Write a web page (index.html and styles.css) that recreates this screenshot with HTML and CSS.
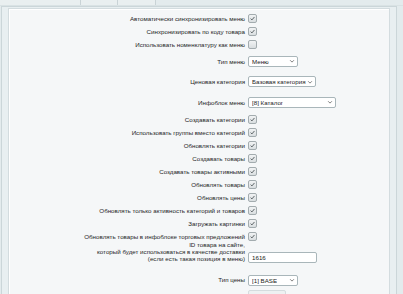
FILE: index.html
```html
<!DOCTYPE html>
<html lang="ru">
<head>
    <meta charset="UTF-8">
    <title>Настройки синхронизации меню</title>
    <link rel="stylesheet" href="styles.css">
</head>
<body>
    <div class="tabs">
        <div class="tab t1"></div>
        <div class="tab t2"></div>
        <div class="tab t3"></div>
        <div class="tab t4"></div>
    </div>
    <div class="frame">
        <div class="panel">
            <div class="row">
                <div class="lbl">Автоматически синхронизировать меню</div>
                <div class="ctl"><span class="cb on"><svg viewBox="0 0 10 10"><path d="M2.3 5.2 L4.2 7 L7.8 2.8"/></svg></span></div>
            </div>
            <div class="row">
                <div class="lbl">Синхронизировать по коду товара</div>
                <div class="ctl"><span class="cb on"><svg viewBox="0 0 10 10"><path d="M2.3 5.2 L4.2 7 L7.8 2.8"/></svg></span></div>
            </div>
            <div class="row">
                <div class="lbl">Использовать номенклатуру как меню</div>
                <div class="ctl"><span class="cb"></span></div>
            </div>

            <div class="row row-sel">
                <div class="lbl">Тип меню</div>
                <div class="ctl"><div class="sel w50"><span>Меню</span><svg viewBox="0 0 8 8"><path d="M1.5 3 L4 5.5 L6.5 3"/></svg></div></div>
            </div>
            <div class="row row-sel">
                <div class="lbl">Ценовая категория</div>
                <div class="ctl"><div class="sel w68"><span>Базовая категория</span><svg viewBox="0 0 8 8"><path d="M1.5 3 L4 5.5 L6.5 3"/></svg></div></div>
            </div>
            <div class="row row-sel">
                <div class="lbl">Инфоблок меню</div>
                <div class="ctl"><div class="sel w88"><span>[8] Каталог</span><svg viewBox="0 0 8 8"><path d="M1.5 3 L4 5.5 L6.5 3"/></svg></div></div>
            </div>

            <div class="row">
                <div class="lbl">Создавать категории</div>
                <div class="ctl"><span class="cb on"><svg viewBox="0 0 10 10"><path d="M2.3 5.2 L4.2 7 L7.8 2.8"/></svg></span></div>
            </div>
            <div class="row">
                <div class="lbl">Использовать группы вместо категорий</div>
                <div class="ctl"><span class="cb on"><svg viewBox="0 0 10 10"><path d="M2.3 5.2 L4.2 7 L7.8 2.8"/></svg></span></div>
            </div>
            <div class="row">
                <div class="lbl">Обновлять категории</div>
                <div class="ctl"><span class="cb on"><svg viewBox="0 0 10 10"><path d="M2.3 5.2 L4.2 7 L7.8 2.8"/></svg></span></div>
            </div>
            <div class="row">
                <div class="lbl">Создавать товары</div>
                <div class="ctl"><span class="cb on"><svg viewBox="0 0 10 10"><path d="M2.3 5.2 L4.2 7 L7.8 2.8"/></svg></span></div>
            </div>
            <div class="row">
                <div class="lbl">Создавать товары активными</div>
                <div class="ctl"><span class="cb on"><svg viewBox="0 0 10 10"><path d="M2.3 5.2 L4.2 7 L7.8 2.8"/></svg></span></div>
            </div>
            <div class="row">
                <div class="lbl">Обновлять товары</div>
                <div class="ctl"><span class="cb on"><svg viewBox="0 0 10 10"><path d="M2.3 5.2 L4.2 7 L7.8 2.8"/></svg></span></div>
            </div>
            <div class="row">
                <div class="lbl">Обновлять цены</div>
                <div class="ctl"><span class="cb on"><svg viewBox="0 0 10 10"><path d="M2.3 5.2 L4.2 7 L7.8 2.8"/></svg></span></div>
            </div>
            <div class="row">
                <div class="lbl">Обновлять только активность категорий и товаров</div>
                <div class="ctl"><span class="cb on"><svg viewBox="0 0 10 10"><path d="M2.3 5.2 L4.2 7 L7.8 2.8"/></svg></span></div>
            </div>
            <div class="row">
                <div class="lbl">Загружать картинки</div>
                <div class="ctl"><span class="cb on"><svg viewBox="0 0 10 10"><path d="M2.3 5.2 L4.2 7 L7.8 2.8"/></svg></span></div>
            </div>
            <div class="row">
                <div class="lbl">Обновлять товары в инфоблоке торговых предложений</div>
                <div class="ctl"><span class="cb on"><svg viewBox="0 0 10 10"><path d="M2.3 5.2 L4.2 7 L7.8 2.8"/></svg></span></div>
            </div>

            <div class="row row-id">
                <div class="lbl">ID товара на сайте,<br>который будет использоваться в качестве доставки<br>(если есть такая позиция в меню)</div>
                <div class="ctl"><div class="inp w69">1616</div></div>
            </div>

            <div class="row row-sel">
                <div class="lbl">Тип цены</div>
                <div class="ctl"><div class="sel w50"><span>[1] BASE</span><svg viewBox="0 0 8 8"><path d="M1.5 3 L4 5.5 L6.5 3"/></svg></div></div>
            </div>
            <div class="row row-last">
                <div class="lbl"></div>
                <div class="ctl"><div class="sel w38"></div></div>
            </div>
        </div>
    </div>
</body>
</html>
```

FILE: styles.css
```css
body {
    margin: 0;
    background: #e3ebed;
    font-family: "Liberation Sans", Arial, sans-serif;
    font-size: 6.2px;
    color: #262626;
    overflow: hidden;
}

/* полоска вкладок сверху */
.tabs {
    display: flex;
    height: 5px;
    border-bottom: 1px solid #d9e2e4;
}
.tab {
    background: #e9eff0;
    border-right: 1px solid #c9d3d6;
}
.t1 { width: 80px; }
.t2 { width: 36px; }
.t3 { width: 37px; }
.t4 { flex: 1; background: #e3ebed; border-right: none; }

.frame {
    margin: 0 6px 0 1px;
    border: 1px solid #cbd6d9;
    border-bottom: none;
    background: #e8eff1;
    padding: 1px 6px 0 6px;
    height: 300px;
}

.panel {
    border: 1px solid #d3dcdf;
    box-shadow: inset 1px 1px 0 #ffffff;
    background: #f5f7f8;
    padding-top: 3px;
    height: 100%;
}

.row {
    display: grid;
    grid-template-columns: 236px 1fr;
    column-gap: 3px;
    align-items: center;
    height: 13px;
}
.row-sel {
    height: 20.6px;
}
.row-id {
    height: 23px;
    margin-top: -3px;
    margin-bottom: 7px;
    align-items: end;
}
.row-last {
    height: 6px;
    align-items: end;
}

.lbl {
    text-align: right;
    white-space: nowrap;
    line-height: 7.3px;
}

.ctl {
    display: flex;
    align-items: center;
}

/* чекбокс в стиле админки */
.cb {
    display: inline-block;
    width: 7px;
    height: 7px;
    border: 1px solid #a3acaf;
    border-radius: 2px;
    background: linear-gradient(#f1f3f4, #d9dee0);
}
.cb svg {
    display: block;
    width: 7px;
    height: 7px;
    fill: none;
    stroke: #4e5659;
    stroke-width: 1.3;
}

.sel, .inp {
    box-sizing: border-box;
    height: 11px;
    background: #fff;
    border: 1px solid #a9b6ba;
    border-radius: 2px;
    display: flex;
    align-items: center;
    justify-content: space-between;
    padding: 0 2px 0 3px;
    color: #222;
    white-space: nowrap;
    overflow: hidden;
}
.sel span {
    overflow: hidden;
}
.sel svg {
    flex: none;
    width: 6px;
    height: 6px;
    fill: none;
    stroke: #555;
    stroke-width: 1;
}
.row-last .sel {
    border-color: #d5dcde;
    background: #eef1f2;
}
.w38 { width: 38px; }
.w50 { width: 50px; }
.w68 { width: 68px; }
.w69 { width: 69px; }
.w88 { width: 88px; }
```
